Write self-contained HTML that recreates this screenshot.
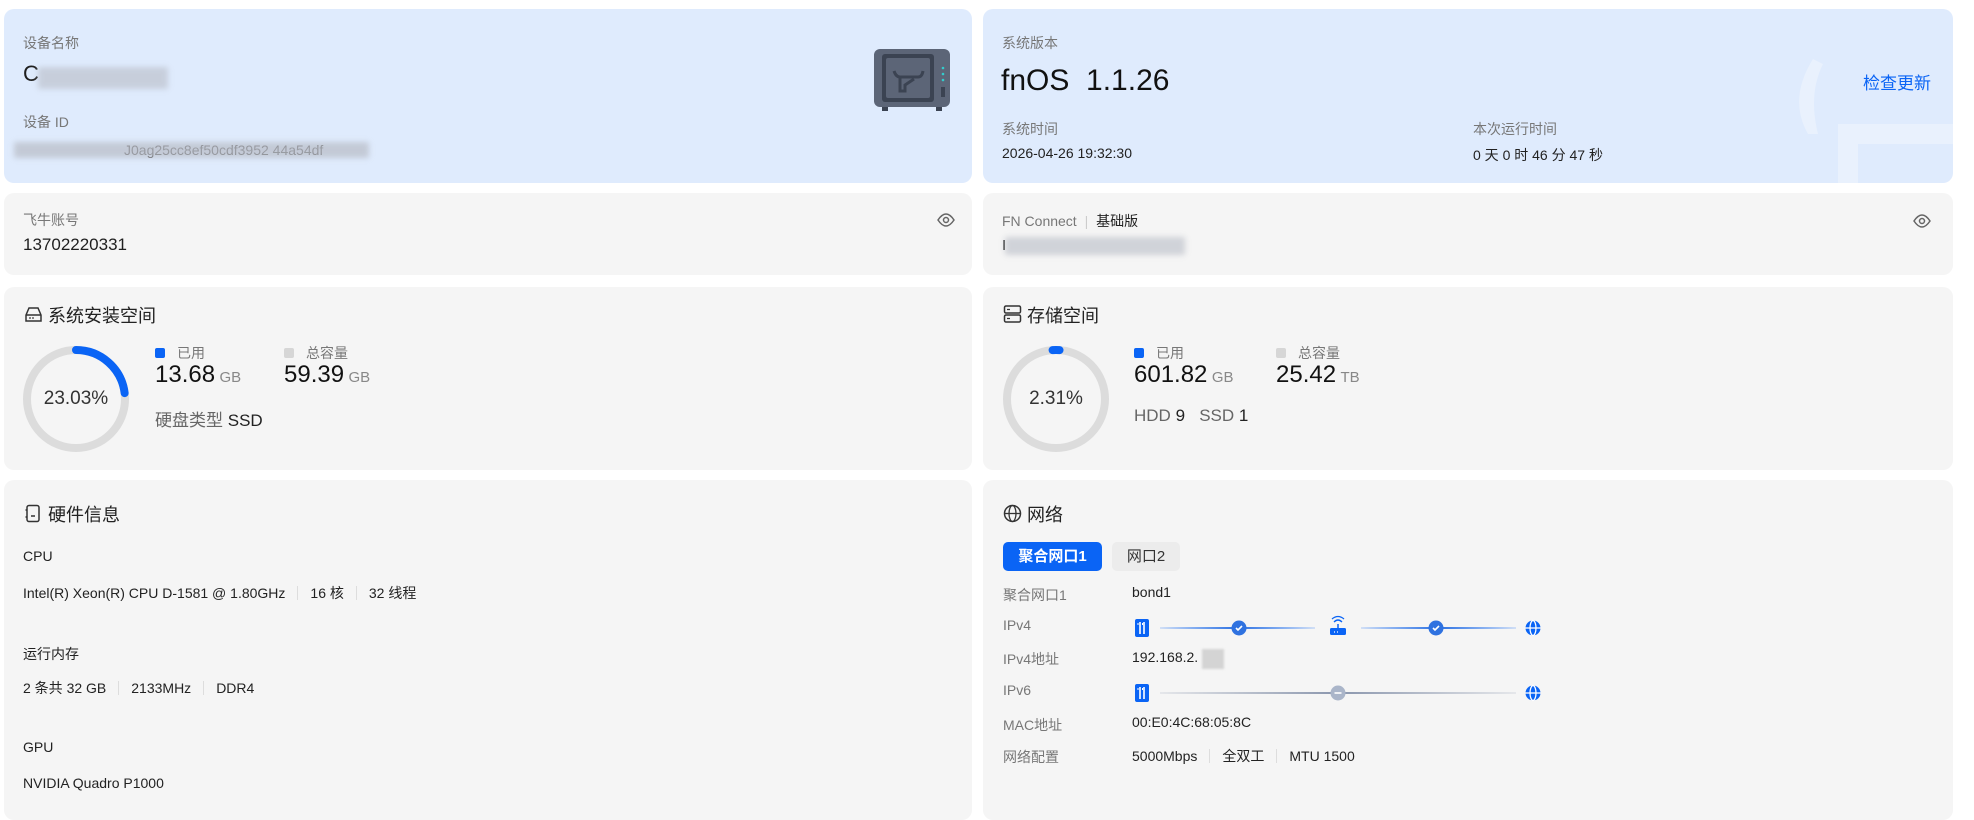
<!DOCTYPE html>
<html><head><meta charset="utf-8"><style>
*{margin:0;padding:0;box-sizing:border-box}
body{width:1974px;height:805px;background:#fff;font-family:"Liberation Sans","Noto Sans CJK SC",sans-serif;color:#1f1f1f;position:relative;overflow:hidden}
.card{position:absolute;border-radius:10px;background:#f5f5f5;overflow:hidden}
.blue{background:#dfebfd}
.a{position:absolute;white-space:nowrap}
.lbl{font-size:14px;color:#777}
.val{font-size:15px;color:#222}
.blur{position:absolute;background:#b8bcc6;filter:blur(3px);opacity:.8}
.h{font-size:18px;color:#222}
.sq{display:inline-block;width:10px;height:10px;border-radius:2px;margin-right:12px;vertical-align:0}
.big{font-size:24px;color:#111}
.unit{font-size:15px;color:#888}
.sep{display:inline-block;width:1px;height:14px;background:#ddd;margin:0 12px;vertical-align:-2px}
</style></head><body>

<div class="card blue" style="left:4px;top:9px;width:968px;height:174px">
 <div class="a lbl" style="left:19px;top:24px">设备名称</div>
 <div class="a" style="left:19px;top:52px;font-size:22px">C</div>
 <div class="blur" style="left:34px;top:58px;width:130px;height:22px;opacity:.6"></div>
 <div class="a lbl" style="left:19px;top:103px">设备 ID</div>
 <div class="a" style="left:120px;top:133px;font-size:14px;color:#555">J0ag25cc8ef50cdf3952 44a54df</div>
 <div class="blur" style="left:10px;top:133px;width:355px;height:16px;opacity:.7"></div>
 <svg class="a" style="left:868px;top:38px" width="80" height="66" viewBox="0 0 80 66">
  <rect x="2" y="2" width="76" height="58" rx="6" fill="#5c6577"/>
  <rect x="10" y="7" width="52" height="48" rx="3" fill="#3b4352"/>
  <rect x="14" y="11" width="44" height="40" rx="2" fill="#5c6577"/>
  <path d="M22 24q2 6 6 6h18q4 0 5-6M28 30v14h5v-6l9-6" stroke="#3b4352" stroke-width="3" fill="none"/>
  <circle cx="71" cy="21" r="1.3" fill="#3cc"/><circle cx="71" cy="27" r="1.3" fill="#3cc"/><circle cx="71" cy="33" r="1.3" fill="#3cc"/>
  <rect x="69" y="40" width="4" height="10" fill="#3b4352"/>
  <rect x="10" y="60" width="6" height="4" fill="#3b4352"/><rect x="64" y="60" width="6" height="4" fill="#3b4352"/>
 </svg>
</div>

<div class="card blue" style="left:983px;top:9px;width:970px;height:174px">
 <svg class="a" style="left:800px;top:45px" width="170" height="135" viewBox="0 0 170 135"><path d="M30 5q-25 40 -5 75l10 0q-10 -40 5 -70zM55 70h115v70h-115zM75 90h95v50h-95z" fill="#e9f1fd" fill-rule="evenodd"/></svg>
 <div class="a lbl" style="left:19px;top:24px">系统版本</div>
 <div class="a" style="left:18px;top:55px;font-size:30px;color:#111">fnOS&nbsp; 1.1.26</div>
 <div class="a" style="left:880px;top:60px;font-size:17px;color:#0a64f5">检查更新</div>
 <div class="a lbl" style="left:19px;top:110px">系统时间</div>
 <div class="a val" style="left:19px;top:136px;font-size:14px">2026-04-26 19:32:30</div>
 <div class="a lbl" style="left:490px;top:110px">本次运行时间</div>
 <div class="a val" style="left:490px;top:136px;font-size:14px">0 天 0 时 46 分 47 秒</div>
</div>

<div class="card" style="left:4px;top:193px;width:968px;height:82px">
 <div class="a lbl" style="left:19px;top:17px">飞牛账号</div>
 <div class="a" style="left:19px;top:42px;font-size:17px">13702220331</div>
 <svg class="a" style="left:933px;top:20px" width="18" height="14" viewBox="0 0 18 14"><path d="M1 7q8-12 16 0q-8 12-16 0z" fill="none" stroke="#666" stroke-width="1.5"/><circle cx="9" cy="7" r="2.5" fill="none" stroke="#666" stroke-width="1.5"/></svg>
</div>

<div class="card" style="left:983px;top:193px;width:970px;height:82px">
 <div class="a lbl" style="left:19px;top:18px">FN Connect <span style="color:#ccc;margin:0 4px">|</span> <span style="color:#222">基础版</span></div>
 <div class="a" style="left:19px;top:44px;font-size:15px">I</div>
 <div class="blur" style="left:22px;top:44px;width:180px;height:18px;opacity:.6"></div>
 <svg class="a" style="left:930px;top:21px" width="18" height="14" viewBox="0 0 18 14"><path d="M1 7q8-12 16 0q-8 12-16 0z" fill="none" stroke="#666" stroke-width="1.5"/><circle cx="9" cy="7" r="2.5" fill="none" stroke="#666" stroke-width="1.5"/></svg>
</div>

<div class="card" style="left:4px;top:287px;width:968px;height:183px">
 <svg class="a" style="left:20px;top:18px" width="19" height="19" viewBox="0 0 19 19"><path d="M2 10l3-7h9l3 7v6h-15z M2 10h15" fill="none" stroke="#333" stroke-width="1.5"/><circle cx="6" cy="13" r=".9" fill="#333"/><circle cx="9" cy="13" r=".9" fill="#333"/></svg>
 <div class="a h" style="left:44px;top:15px">系统安装空间</div>
 <svg class="a" style="left:18px;top:58px" width="108" height="108" viewBox="0 0 108 108"><circle cx="54" cy="54" r="49" fill="none" stroke="#dcdcdc" stroke-width="8"/><circle cx="54" cy="54" r="49" fill="none" stroke="#0a64f5" stroke-width="8" stroke-dasharray="70.9 400" stroke-linecap="round" transform="rotate(-90 54 54)"/></svg>
 <div class="a" style="left:18px;top:101px;width:108px;text-align:center;font-size:19px;color:#333">23.03%</div>
 <div class="a lbl" style="left:151px;top:56px"><span class="sq" style="background:#0a64f5"></span>已用</div>
 <div class="a" style="left:151px;top:74px"><span class="big">13.68</span> <span class="unit">GB</span></div>
 <div class="a lbl" style="left:280px;top:56px"><span class="sq" style="background:#d6d6d6"></span>总容量</div>
 <div class="a" style="left:280px;top:74px"><span class="big">59.39</span> <span class="unit">GB</span></div>
 <div class="a" style="left:151px;top:119px;font-size:17px;color:#666">硬盘类型 <span style="color:#222">SSD</span></div>
</div>

<div class="card" style="left:983px;top:287px;width:970px;height:183px">
 <svg class="a" style="left:20px;top:17px" width="19" height="20" viewBox="0 0 19 20"><rect x="1.5" y="2" width="16" height="7" rx="1.5" fill="none" stroke="#333" stroke-width="1.5"/><rect x="1.5" y="11" width="16" height="7" rx="1.5" fill="none" stroke="#333" stroke-width="1.5"/><path d="M4 5.5h3M4 14.5h3" stroke="#333" stroke-width="1.3"/></svg>
 <div class="a h" style="left:44px;top:15px">存储空间</div>
 <svg class="a" style="left:19px;top:58px" width="108" height="108" viewBox="0 0 108 108"><circle cx="54" cy="54" r="49" fill="none" stroke="#dcdcdc" stroke-width="8"/><circle cx="54" cy="54" r="49" fill="none" stroke="#0a64f5" stroke-width="8" stroke-dasharray="7 400" stroke-linecap="round" transform="rotate(-94 54 54)"/></svg>
 <div class="a" style="left:19px;top:101px;width:108px;text-align:center;font-size:19px;color:#333">2.31%</div>
 <div class="a lbl" style="left:151px;top:56px"><span class="sq" style="background:#0a64f5"></span>已用</div>
 <div class="a" style="left:151px;top:74px"><span class="big">601.82</span> <span class="unit">GB</span></div>
 <div class="a lbl" style="left:293px;top:56px"><span class="sq" style="background:#d6d6d6"></span>总容量</div>
 <div class="a" style="left:293px;top:74px"><span class="big">25.42</span> <span class="unit">TB</span></div>
 <div class="a" style="left:151px;top:119px;font-size:17px;color:#666">HDD <span style="color:#222">9</span>&nbsp;&nbsp; SSD <span style="color:#222">1</span></div>
</div>

<div class="card" style="left:4px;top:480px;width:968px;height:340px">
 <svg class="a" style="left:20px;top:24px" width="18" height="19" viewBox="0 0 18 19"><rect x="3" y="1.5" width="12" height="16" rx="2" fill="none" stroke="#333" stroke-width="1.5"/><path d="M3 6h-1.5M3 13h-1.5M7 12h4" stroke="#333" stroke-width="1.5"/></svg>
 <div class="a h" style="left:44px;top:21px">硬件信息</div>
 <div class="a val" style="left:19px;top:68px;font-size:14px">CPU</div>
 <div class="a val" style="left:19px;top:103px;font-size:14px">Intel(R) Xeon(R) CPU D-1581 @ 1.80GHz<span class="sep"></span>16 核<span class="sep"></span>32 线程</div>
 <div class="a val" style="left:19px;top:164px;font-size:14px">运行内存</div>
 <div class="a val" style="left:19px;top:198px;font-size:14px">2 条共 32 GB<span class="sep"></span>2133MHz<span class="sep"></span>DDR4</div>
 <div class="a val" style="left:19px;top:259px;font-size:14px">GPU</div>
 <div class="a val" style="left:19px;top:295px;font-size:14px">NVIDIA Quadro P1000</div>
</div>

<div class="card" style="left:983px;top:480px;width:970px;height:340px">
 <svg class="a" style="left:20px;top:24px" width="19" height="19" viewBox="0 0 19 19"><circle cx="9.5" cy="9.5" r="8" fill="none" stroke="#333" stroke-width="1.5"/><ellipse cx="9.5" cy="9.5" rx="3.5" ry="8" fill="none" stroke="#333" stroke-width="1.3"/><path d="M1.5 9.5h16" stroke="#333" stroke-width="1.3"/></svg>
 <div class="a h" style="left:44px;top:21px">网络</div>
 <div class="a" style="left:20px;top:62px;width:99px;height:29px;border-radius:5px;background:#0a64f5;color:#fff;font-size:15px;font-weight:bold;text-align:center;line-height:29px">聚合网口1</div>
 <div class="a" style="left:129px;top:62px;width:68px;height:29px;border-radius:5px;background:#ececec;color:#333;font-size:15px;text-align:center;line-height:29px">网口2</div>
 <div class="a lbl" style="left:20px;top:105px">聚合网口1</div><div class="a val" style="left:149px;top:104px;font-size:14px">bond1</div>
 <div class="a lbl" style="left:20px;top:137px">IPv4</div>
 <div class="a lbl" style="left:20px;top:169px">IPv4地址</div><div class="a val" style="left:149px;top:169px;font-size:14px">192.168.2.</div>
 <div class="blur" style="left:219px;top:169px;width:22px;height:20px;background:#ccc;filter:blur(1px)"></div>
 <div class="a lbl" style="left:20px;top:202px">IPv6</div>
 <div class="a lbl" style="left:20px;top:235px">MAC地址</div><div class="a val" style="left:149px;top:234px;font-size:14px">00:E0:4C:68:05:8C</div>
 <div class="a lbl" style="left:20px;top:267px">网络配置</div><div class="a val" style="left:149px;top:266px;font-size:14px">5000Mbps<span class="sep"></span>全双工<span class="sep"></span>MTU 1500</div>
 <svg class="a" style="left:140px;top:130px" width="440" height="100" viewBox="0 0 440 100">
  <defs><linearGradient id="g" x1="0" x2="1"><stop offset="0" stop-color="#0a64f5" stop-opacity=".15"/><stop offset=".5" stop-color="#2f72e0"/><stop offset="1" stop-color="#0a64f5" stop-opacity=".15"/></linearGradient>
  <linearGradient id="g2" x1="0" x2="1"><stop offset="0" stop-color="#8a96ad" stop-opacity=".15"/><stop offset=".5" stop-color="#8a96ad"/><stop offset="1" stop-color="#8a96ad" stop-opacity=".15"/></linearGradient>
  <g id="nic"><rect x="-7" y="-9" width="14" height="18" rx="2" fill="#0a64f5"/><path d="M-2 -6v12M2 -6v12" stroke="#fff" stroke-width="1.6"/><path d="M-4 -5v2M0.5 -5v2" stroke="#fff" stroke-width="1"/></g>
  <g id="glb"><circle cx="0" cy="0" r="7.5" fill="#0a64f5"/><ellipse cx="0" cy="0" rx="3" ry="7.5" fill="none" stroke="#fff" stroke-width="1.3"/><path d="M-7.5 0h15" stroke="#fff" stroke-width="1.3"/></g>
  <g id="chk"><circle r="7.5" fill="#2f72e0"/><path d="M-3 0l2 2 4-4" stroke="#fff" stroke-width="1.6" fill="none"/></g></defs>
  <rect x="37" y="17" width="155" height="2" fill="url(#g)"/><rect x="238" y="17" width="155" height="2" fill="url(#g)"/>
  <use href="#nic" x="19" y="18"/><use href="#chk" x="116" y="18"/><use href="#chk" x="313" y="18"/><use href="#glb" x="410" y="18"/>
  <g transform="translate(215 18)"><rect x="-8" y="0" width="16" height="7" rx="1.5" fill="#0a64f5"/><path d="M0 0v-4" stroke="#0a64f5" stroke-width="1.5"/><path d="M-4 -6q4-4 8 0M-6 -9q6-5 12 0" stroke="#0a64f5" stroke-width="1.3" fill="none"/><path d="M-4 4h1M-1 4h1" stroke="#fff" stroke-width="1.2"/></g>
  <rect x="37" y="82" width="356" height="2" fill="url(#g2)"/>
  <use href="#nic" x="19" y="83"/><use href="#glb" x="410" y="83"/>
  <circle cx="215" cy="83" r="7.5" fill="#aab5c9"/><path d="M211.5 83h7" stroke="#fff" stroke-width="1.6"/>
 </svg>
</div>
</body></html>
